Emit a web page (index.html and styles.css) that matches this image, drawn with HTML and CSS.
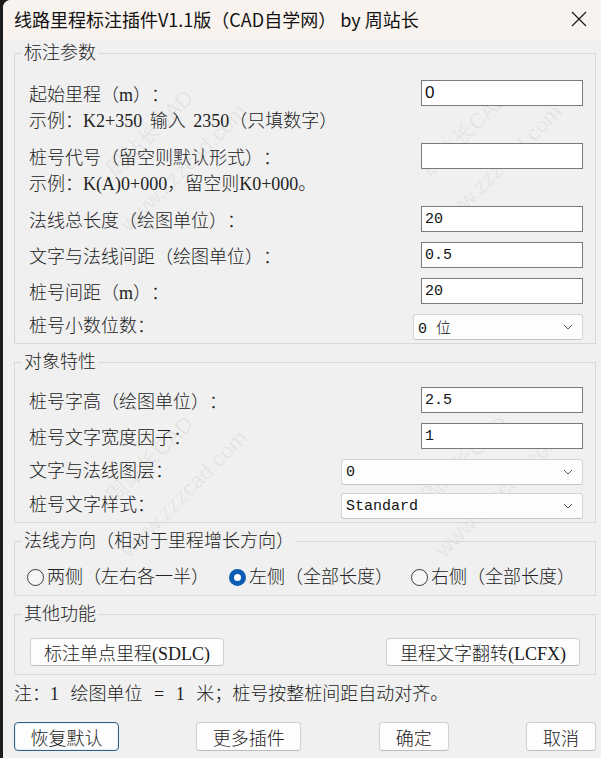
FILE: index.html
```html
<!DOCTYPE html>
<html lang="zh-CN">

<head>
  <meta charset="UTF-8">
  <meta name="viewport" content="width=device-width, initial-scale=1.0">
  <title>线路里程标注插件</title>
  <link rel="stylesheet" href="styles.css">
</head>

<body>
  <div class="window">
    <!-- watermark tiles, painted under the controls -->
    <div class="watermark mark-a">周站长CAD<br>www.zzzcad.com</div>
    <div class="watermark mark-b">周站长CAD<br>www.zzzcad.com</div>
    <div class="watermark mark-c">周站长CAD<br>www.zzzcad.com</div>
    <div class="watermark mark-d">周站长CAD<br>www.zzzcad.com</div>

    <header class="titlebar">
      <span class="title">线路里程标注插件V1.1版（CAD自学网） by 周站长</span>
      <span class="close">
        <svg width="16" height="16" viewBox="0 0 16 16">
          <path d="M1 1L15 15M15 1L1 15" stroke="#1a1a1a" stroke-width="1.2" fill="none" />
        </svg>
      </span>
    </header>

    <main class="content">
      <fieldset class="group">
        <legend>标注参数</legend>
        <div class="group-body params">
          <div class="row">
            <label for="start">起始里程（m）：</label>
            <input type="text" id="start" class="field field-sans" value="0">
          </div>
          <p class="hint">示例：K2+350 输入 2350（只填数字）</p>
          <div class="row">
            <label for="prefix">桩号代号（留空则默认形式）：</label>
            <input type="text" id="prefix" class="field" value="">
          </div>
          <p class="hint">示例：K(A)0+000，留空则K0+000。</p>
          <div class="row">
            <label for="length">法线总长度（绘图单位）：</label>
            <input type="text" id="length" class="field" value="20">
          </div>
          <div class="row">
            <label for="gap">文字与法线间距（绘图单位）：</label>
            <input type="text" id="gap" class="field" value="0.5">
          </div>
          <div class="row">
            <label for="step">桩号间距（m）：</label>
            <input type="text" id="step" class="field" value="20">
          </div>
          <div class="row row-select">
            <label>桩号小数位数：</label>
            <div class="select select-short">
              <span>0 位</span>
              <svg width="10" height="6" viewBox="0 0 10 6"><path d="M1 1L5 5L9 1" stroke="#555" fill="none" /></svg>
            </div>
          </div>
        </div>
      </fieldset>

      <fieldset class="group">
        <legend>对象特性</legend>
        <div class="group-body props">
          <div class="row">
            <label for="height">桩号字高（绘图单位）：</label>
            <input type="text" id="height" class="field" value="2.5">
          </div>
          <div class="row">
            <label for="width">桩号文字宽度因子：</label>
            <input type="text" id="width" class="field" value="1">
          </div>
          <div class="row row-select">
            <label>文字与法线图层：</label>
            <div class="select select-wide">
              <span>0</span>
              <svg width="10" height="6" viewBox="0 0 10 6"><path d="M1 1L5 5L9 1" stroke="#555" fill="none" /></svg>
            </div>
          </div>
          <div class="row row-select">
            <label>桩号文字样式：</label>
            <div class="select select-wide">
              <span>Standard</span>
              <svg width="10" height="6" viewBox="0 0 10 6"><path d="M1 1L5 5L9 1" stroke="#555" fill="none" /></svg>
            </div>
          </div>
        </div>
      </fieldset>

      <fieldset class="group">
        <legend>法线方向（相对于里程增长方向）</legend>
        <div class="radio-row">
          <span class="radio"><span class="dot"></span>两侧（左右各一半）</span>
          <span class="radio"><span class="dot checked"></span>左侧（全部长度）</span>
          <span class="radio"><span class="dot"></span>右侧（全部长度）</span>
        </div>
      </fieldset>

      <fieldset class="group">
        <legend>其他功能</legend>
        <div class="tools">
          <button class="btn btn-tool">标注单点里程(SDLC)</button>
          <button class="btn btn-tool">里程文字翻转(LCFX)</button>
        </div>
      </fieldset>

      <p class="note">注：1 绘图单位 = 1 米；桩号按整桩间距自动对齐。</p>

      <div class="footer">
        <button class="btn btn-wide btn-focus">恢复默认</button>
        <button class="btn btn-wide">更多插件</button>
        <button class="btn btn-small">确定</button>
        <button class="btn btn-small">取消</button>
      </div>
    </main>
  </div>
</body>

</html>
```

FILE: styles.css
```css
body {
  margin: 0;
  background-color: #1c1c1c;
  font-family: "Liberation Serif", "Noto Sans CJK SC", serif;
  font-size: 18px;
  font-weight: 300;
  word-spacing: 3px;
  color: #222;
  text-spacing-trim: space-all;
  overflow: hidden;
}

.window {
  position: relative;
  isolation: isolate;
  margin-left: 3px;
  height: 780px;
  background-color: #f0f0f0;
  border-top-left-radius: 8px;
  overflow: hidden;
}

/* title bar */

.titlebar {
  display: flex;
  align-items: center;
  justify-content: space-between;
  height: 40px;
  padding: 0 14px 3px 11px;
  box-sizing: border-box;
  background-color: #f8f3ee;
  font-family: "Noto Sans CJK SC", sans-serif;
  font-size: 18px;
  font-weight: 400;
  word-spacing: 0;
  color: #111;
}

.close {
  display: flex;
  margin-top: 1px;
}

/* group boxes */

.content {
  padding: 3px 5px 0 11px;
}

.group {
  margin: 0;
  padding: 0;
  min-width: 0;
  border: 1px solid #d8d8d8;
}

.group + .group {
  margin-top: 8px;
}

.group legend {
  margin-left: 7px;
  padding: 0 2px;
  line-height: 20px;
}

.group-body {
  padding: 17px 12px 3px 14px;
}

.group-body.props {
  padding-top: 15px;
}

.row {
  display: flex;
  align-items: center;
  justify-content: space-between;
  height: 26px;
}

.row + .row {
  margin-top: 10px;
}

.props .row-select + .row-select {
  margin-top: 8px;
}

.row-select label {
  margin-bottom: 6px;
}

.hint {
  margin: 5px 0 0;
  line-height: 20px;
}

.hint + .row {
  margin-top: 12px;
}

.field {
  box-sizing: border-box;
  width: 162px;
  height: 26px;
  margin: 0;
  padding: 0 3px;
  border: 1px solid #7a7a7a;
  border-radius: 0;
  background-color: #fff;
  font-family: "Liberation Mono", "Noto Sans CJK SC", monospace;
  font-size: 15px;
  color: #111;
  outline: none;
}

.field-sans {
  font-family: "Liberation Sans", sans-serif;
  font-size: 17px;
}

.select {
  box-sizing: border-box;
  display: flex;
  align-items: center;
  justify-content: space-between;
  height: 26px;
  padding: 0 9px 0 4px;
  border: 1px solid #d4d4d4;
  border-bottom-color: #c4c4c4;
  border-radius: 3px;
  background-color: #fdfdfd;
  font-family: "Liberation Mono", "Noto Sans CJK SC", monospace;
  font-size: 15px;
  word-spacing: 0;
  color: #111;
}

.select-short {
  width: 170px;
}

.select-wide {
  width: 242px;
}

/* radio buttons */

.radio-row {
  display: grid;
  grid-template-columns: 202px 182px auto;
  padding: 16px 0 8px 12px;
}

.radio {
  display: flex;
  align-items: center;
  gap: 3px;
  line-height: 20px;
}

.dot {
  box-sizing: border-box;
  width: 17px;
  height: 17px;
  border: 1px solid #3a3a3a;
  border-radius: 50%;
  background-color: #f6f6f6;
}

.dot.checked {
  border: 5px solid #0a5db3;
  background-color: #fff;
}

/* buttons */

.tools {
  display: flex;
  justify-content: space-between;
  padding: 14px 15px 8px 15px;
}

.btn {
  box-sizing: border-box;
  margin: 0;
  padding: 0;
  border: 1px solid #d0d0d0;
  border-bottom-color: #bdbdbd;
  border-radius: 4px;
  background-color: #fdfdfd;
  font-family: "Liberation Serif", "Noto Sans CJK SC", serif;
  font-size: 18px;
  font-weight: 300;
  color: #1a1a1a;
  text-spacing-trim: space-all;
}

.btn-tool {
  width: 194px;
  height: 28px;
}

.note {
  margin: 9px 0 0;
  line-height: 20px;
  word-spacing: 7px;
}

.footer {
  display: flex;
  justify-content: space-between;
  margin-top: 18px;
}

.footer .btn {
  height: 29px;
}

.btn-wide {
  width: 105px;
}

.btn-small {
  width: 70px;
}

.btn-focus {
  border: 1px solid #2d6189;
  box-shadow: inset 0 0 0 1px #e9f1f7;
}

/* faint diagonal watermark */

.watermark {
  position: absolute;
  z-index: -1;
  width: 220px;
  margin: -48px 0 0 -110px;
  text-align: center;
  font-family: "Liberation Sans", "Noto Sans CJK SC", sans-serif;
  font-size: 22px;
  font-weight: 400;
  line-height: 48px;
  word-spacing: 0;
  color: rgba(0, 0, 0, 0.06);
  transform: rotate(-45deg);
  pointer-events: none;
}

.mark-a { left: 164px; top: 151px; }
.mark-b { left: 479px; top: 151px; }
.mark-c { left: 164px; top: 477px; }
.mark-d { left: 479px; top: 477px; }
```
